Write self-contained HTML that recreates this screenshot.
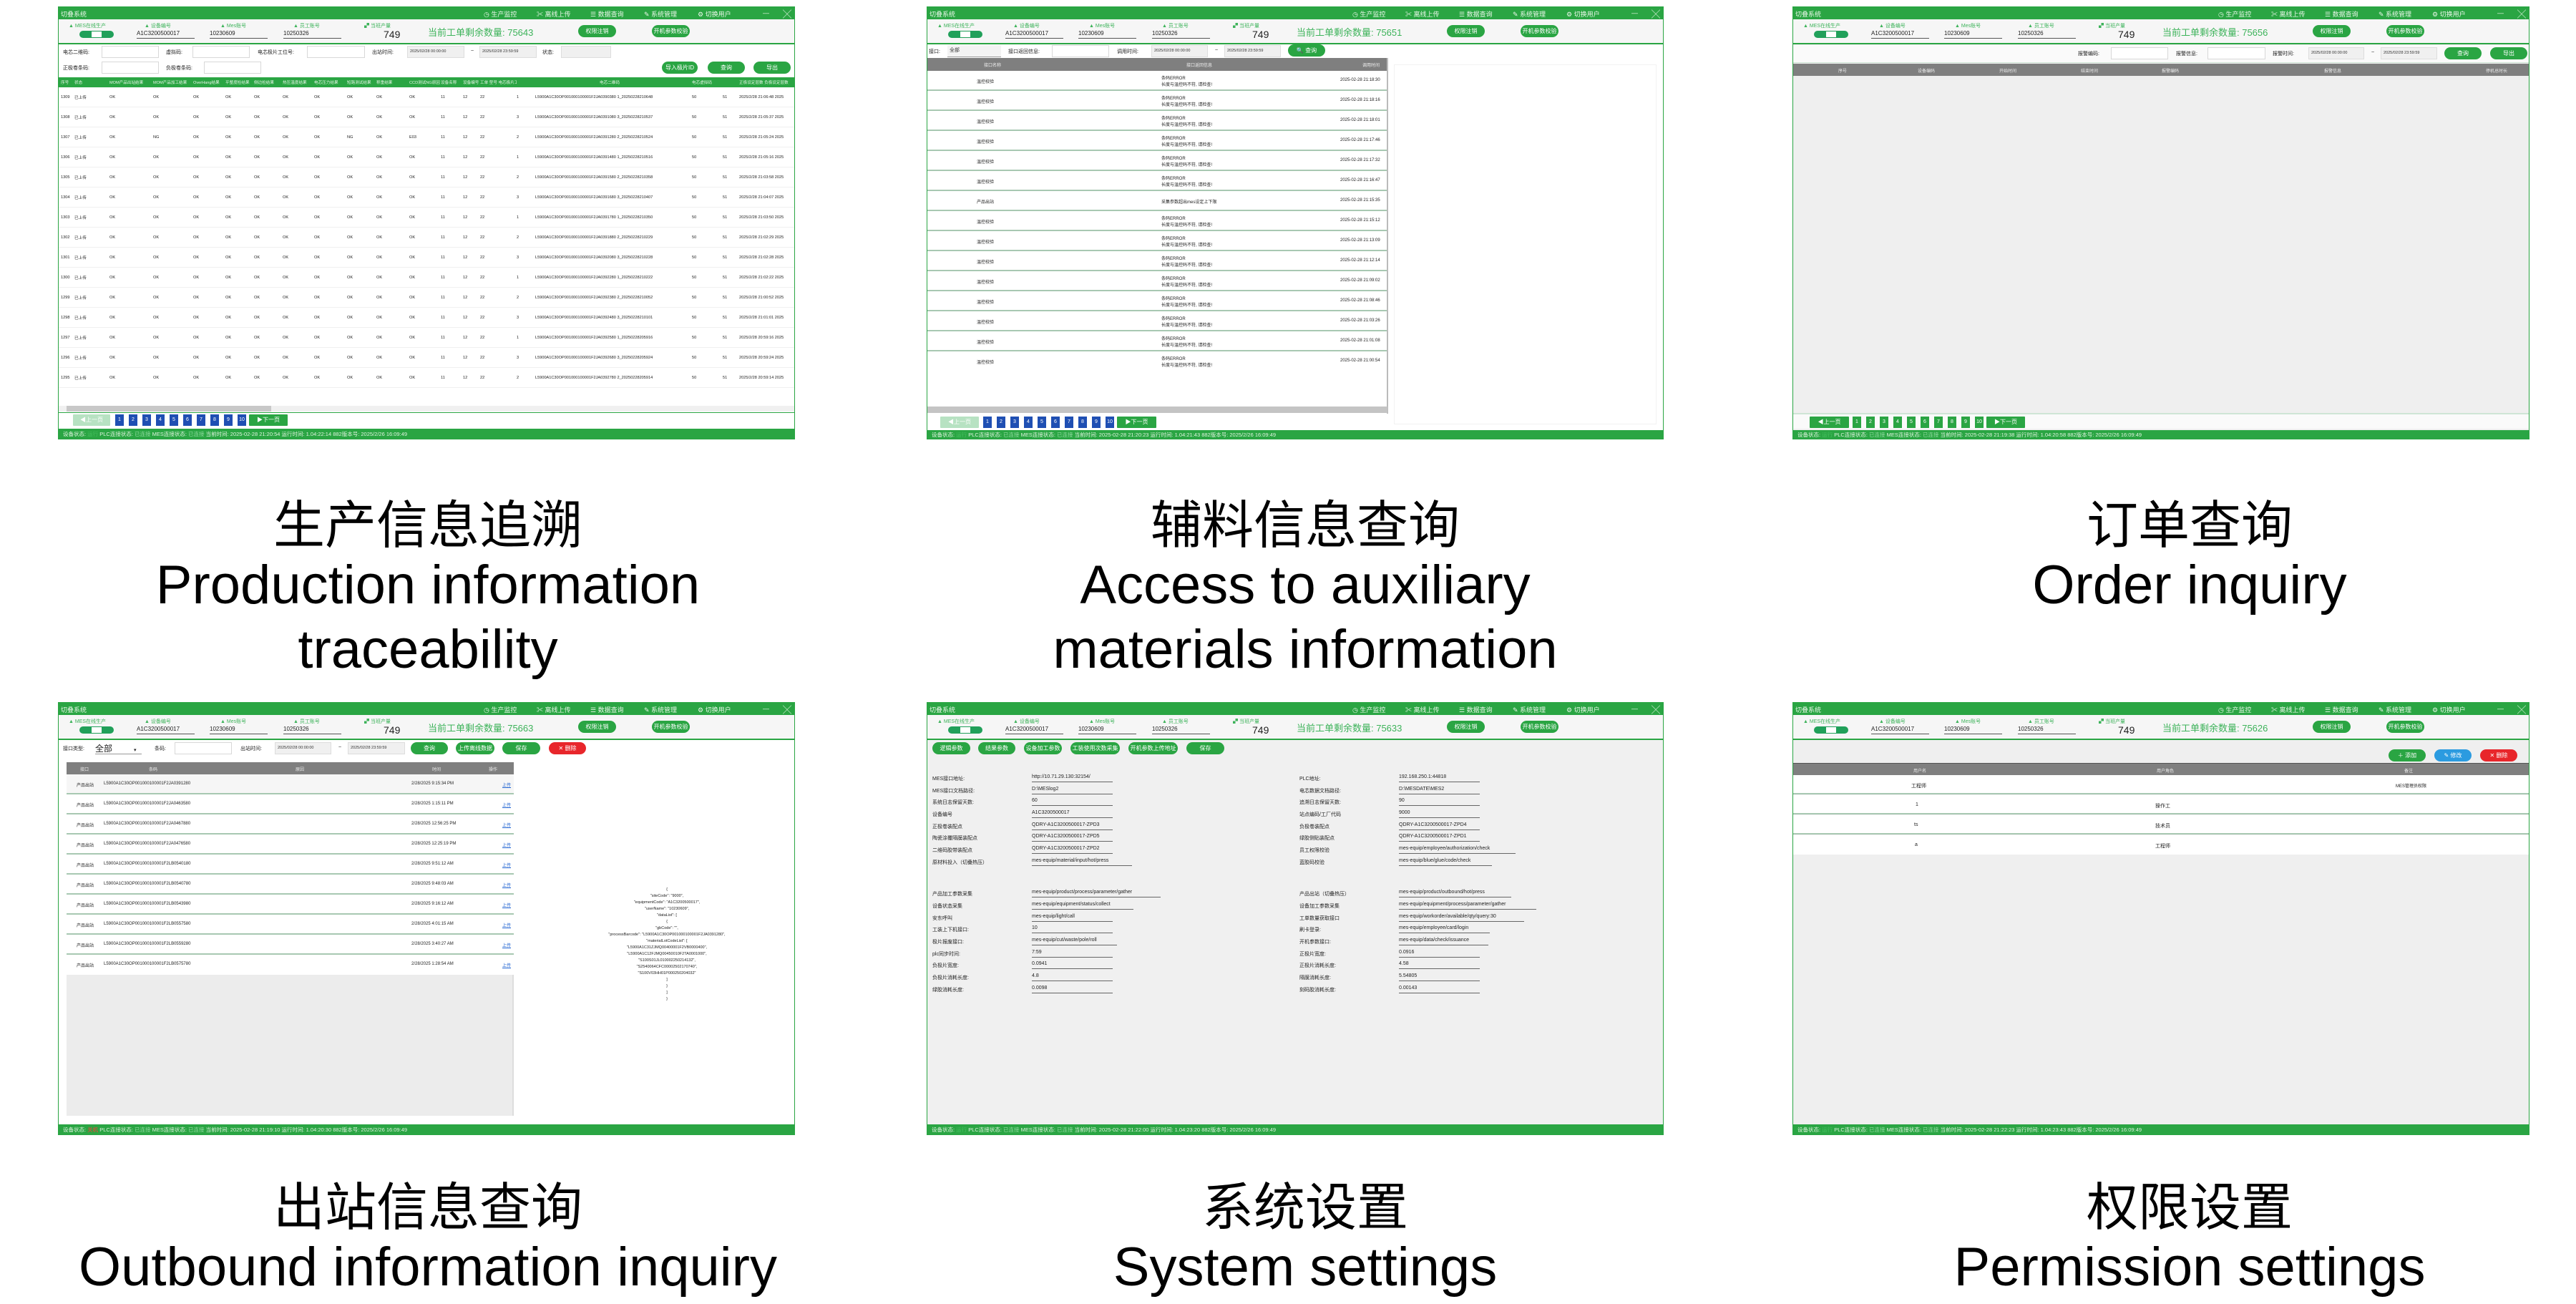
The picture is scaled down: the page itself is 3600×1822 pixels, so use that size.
<!DOCTYPE html>
<html><head><meta charset="utf-8">
<style>
*{margin:0;padding:0;box-sizing:border-box}
body{width:3600px;height:1822px;background:#fff;position:relative;overflow:hidden;font-family:"Liberation Sans","Noto Sans CJK SC",sans-serif}
.shot{position:absolute;width:1030px;height:605px;background:#fff;border:1px solid #2aa543;overflow:hidden;font-size:7px;color:#222;font-family:"Liberation Sans","Noto Sans CJK SC",sans-serif}
.a{position:absolute;white-space:nowrap}
.tb{position:absolute;left:0;top:0;width:100%;height:17px;background:#2aa543;color:#eaf7ea}
.tb .a{top:3px;font-size:9px}
.hd{position:absolute;left:0;top:17px;width:100%;height:35px;background:#f6f6f6;border-bottom:2px solid #2aa543}
.lb{color:#3db35a;font-size:7px;top:4px}
.val{top:15px;font-size:8px;border-bottom:1px solid #555;height:12px;width:81px;color:#222}
.tog{top:16px;left:29px;width:48px;height:10px;border-radius:5px;background:#21a05a}
.tog i{position:absolute;left:17px;top:1px;width:14px;height:8px;background:#fff}
.cnt{left:454px;top:13px;font-size:14px;color:#222}
.rem{left:516px;top:8px;font-size:13px;color:#3db35a}
.btn{position:absolute;background:#2aa543;color:#fff;border-radius:9px;text-align:center;height:17px;line-height:17px;font-size:8px;white-space:nowrap;overflow:hidden}
.red{background:#e8262b}.blue{background:#2b9be0}.pale{background:#b7e2c2}
.sb{position:absolute;left:0;top:589px;width:100%;height:16px;background:#2aa543;color:#dff2df;font-size:7.5px;line-height:16px;padding-left:6px;white-space:nowrap}
.inp{position:absolute;height:17px;background:#fff;border:1px solid #d8d8d8}
.dt{position:absolute;height:17px;background:#f0f0f0;border:1px solid #ddd;font-size:5.5px;line-height:15px;padding-left:3px;color:#333}
.pg{position:absolute;height:16px;width:12px;background:#1f4fb3;color:#fff;font-size:7px;text-align:center;line-height:16px}
.gh{position:absolute;background:#7f7f7f;color:#eee;font-size:6px}
.r1{position:absolute;left:0;width:1030px;height:28px;display:grid;grid-template-columns:19px 49px 61px 56px 45px 40px 40px 44px 46px 41px 46px 44px 31px 24px 51px 26px 219px 43px 23px 80px;align-items:center;font-size:5.6px;padding-left:3px;border-bottom:1px solid #f0f0f0}
.r1 span{white-space:nowrap;overflow:hidden}
.cap{position:absolute;width:1200px;text-align:center;color:#000;white-space:nowrap}
.zh{font-family:"Noto Sans CJK SC","WenQuanYi Zen Hei",sans-serif;font-size:72px;line-height:90px}
.en{font-family:"Liberation Sans",sans-serif;font-size:76px;line-height:90px}
.r2{position:absolute;left:0;width:643px;height:28px;border-bottom:2px solid #a8c8b2;background:#fff;font-size:6px}
.r4{position:absolute;left:11px;width:625px;height:28px;border-bottom:2px solid #a8c8b2;background:#fff;font-size:6px}
.fl{font-size:7px}
.fv{font-size:7px;border-bottom:1px solid #666;width:113px;height:11px}
</style></head><body>

<!-- ============ SHOT 1 ============ -->
<div class="shot" style="left:81px;top:9px">
 <div class="tb"><span class="a" style="left:3px">切叠系统</span><span class="a" style="left:594px">◷ 生产监控</span><span class="a" style="left:668px">✂ 离线上传</span><span class="a" style="left:743px">☰ 数据查询</span><span class="a" style="left:818px">✎ 系统管理</span><span class="a" style="left:893px">⚙ 切换用户</span><span class="a" style="left:984px">—</span><span class="a" style="left:1012px;font-size:12px;top:1px">╳</span></div>
 <div class="hd"><span class="a lb" style="left:14px">▲ MES在线生产</span><div class="a tog"><i></i></div><span class="a lb" style="left:120px">▲ 设备编号</span><span class="a val" style="left:109px">A1C3200500017</span><span class="a lb" style="left:226px">▲ Mes账号</span><span class="a val" style="left:211px">10230609</span><span class="a lb" style="left:328px">▲ 员工账号</span><span class="a val" style="left:314px">10250326</span><span class="a lb" style="left:427px">▞ 当班产量</span><span class="a cnt">749</span><span class="a rem">当前工单剩余数量: 75643</span><div class="btn" style="left:726px;top:8px;width:53px">权限注销</div><div class="btn" style="left:829px;top:8px;width:53px">开机参数校验</div></div>
 <span class="a" style="left:6px;top:58px">电芯二维码:</span><div class="inp" style="left:60px;top:54px;width:80px"></div>
 <span class="a" style="left:150px;top:58px">虚拟码:</span><div class="inp" style="left:187px;top:54px;width:80px"></div>
 <span class="a" style="left:278px;top:58px">电芯极片工位号:</span><div class="inp" style="left:347px;top:54px;width:81px"></div>
 <span class="a" style="left:438px;top:58px">出站时间:</span><div class="dt" style="left:487px;top:54px;width:80px">2025/02/28 00:00:00</div><span class="a" style="left:576px;top:58px">~</span><div class="dt" style="left:588px;top:54px;width:80px">2025/02/28 23:59:59</div>
 <span class="a" style="left:676px;top:58px">状态:</span><div class="dt" style="left:702px;top:54px;width:70px"></div>
 <span class="a" style="left:6px;top:80px">正极卷条码:</span><div class="inp" style="left:60px;top:76px;width:80px"></div>
 <span class="a" style="left:150px;top:80px">负极卷条码:</span><div class="inp" style="left:203px;top:76px;width:80px"></div>
 <div class="btn" style="left:843px;top:76px;width:50px">导入极片ID</div><div class="btn" style="left:907px;top:76px;width:52px">查询</div><div class="btn" style="left:971px;top:76px;width:52px">导出</div>
 <div class="r1" style="top:98px;height:14px;background:#2aa543;color:#e6f5e6;border:0"><span>序号</span><span>状态</span><span>MOM产品出站结果</span><span>MOM产品加工结果</span><span>OverHang结果</span><span>平整度检结果</span><span>侧边检结果</span><span>热压温度结果</span><span>电芯压力结果</span><span>短路测试结果</span><span>称重结果</span><span>CCD测试NG原因</span><span>设备名称</span><span>设备编号</span><span>工单 型号 电芯极片工位号</span><span></span><span style="padding-left:90px">电芯二维码</span><span>电芯虚拟码</span><span></span><span>正极设定层数 负极设定层数</span></div>
 <div class="r1" style="top:112px"><span>1309</span><span>已上传</span><span>OK</span><span>OK</span><span>OK</span><span>OK</span><span>OK</span><span>OK</span><span>OK</span><span>OK</span><span>OK</span><span>OK</span><span>11</span><span>12</span><span>22</span><span>1</span><span>L5900A1C30OP001000100001F2JA0390380 1_20250228210648</span><span>50</span><span>51</span><span>2025/2/28 21:06:48 2025</span></div>
 <div class="r1" style="top:140px"><span>1308</span><span>已上传</span><span>OK</span><span>OK</span><span>OK</span><span>OK</span><span>OK</span><span>OK</span><span>OK</span><span>OK</span><span>OK</span><span>OK</span><span>11</span><span>12</span><span>22</span><span>3</span><span>L5900A1C30OP001000100001F2JA0391080 3_20250228210537</span><span>50</span><span>51</span><span>2025/2/28 21:05:37 2025</span></div>
 <div class="r1" style="top:168px"><span>1307</span><span>已上传</span><span>OK</span><span>NG</span><span>OK</span><span>OK</span><span>OK</span><span>OK</span><span>OK</span><span>NG</span><span>OK</span><span>E03</span><span>11</span><span>12</span><span>22</span><span>2</span><span>L5900A1C30OP001000100001F2JA0391280 2_20250228210524</span><span>50</span><span>51</span><span>2025/2/28 21:05:24 2025</span></div>
 <div class="r1" style="top:196px"><span>1306</span><span>已上传</span><span>OK</span><span>OK</span><span>OK</span><span>OK</span><span>OK</span><span>OK</span><span>OK</span><span>OK</span><span>OK</span><span>OK</span><span>11</span><span>12</span><span>22</span><span>1</span><span>L5900A1C30OP001000100001F2JA0391480 1_20250228210516</span><span>50</span><span>51</span><span>2025/2/28 21:05:16 2025</span></div>
 <div class="r1" style="top:224px"><span>1305</span><span>已上传</span><span>OK</span><span>OK</span><span>OK</span><span>OK</span><span>OK</span><span>OK</span><span>OK</span><span>OK</span><span>OK</span><span>OK</span><span>11</span><span>12</span><span>22</span><span>2</span><span>L5900A1C30OP001000100001F2JA0391580 2_20250228210358</span><span>50</span><span>51</span><span>2025/2/28 21:03:58 2025</span></div>
 <div class="r1" style="top:252px"><span>1304</span><span>已上传</span><span>OK</span><span>OK</span><span>OK</span><span>OK</span><span>OK</span><span>OK</span><span>OK</span><span>OK</span><span>OK</span><span>OK</span><span>11</span><span>12</span><span>22</span><span>3</span><span>L5900A1C30OP001000100001F2JA0391680 3_20250228210407</span><span>50</span><span>51</span><span>2025/2/28 21:04:07 2025</span></div>
 <div class="r1" style="top:280px"><span>1303</span><span>已上传</span><span>OK</span><span>OK</span><span>OK</span><span>OK</span><span>OK</span><span>OK</span><span>OK</span><span>OK</span><span>OK</span><span>OK</span><span>11</span><span>12</span><span>22</span><span>1</span><span>L5900A1C30OP001000100001F2JA0391780 1_20250228210350</span><span>50</span><span>51</span><span>2025/2/28 21:03:50 2025</span></div>
 <div class="r1" style="top:308px"><span>1302</span><span>已上传</span><span>OK</span><span>OK</span><span>OK</span><span>OK</span><span>OK</span><span>OK</span><span>OK</span><span>OK</span><span>OK</span><span>OK</span><span>11</span><span>12</span><span>22</span><span>2</span><span>L5900A1C30OP001000100001F2JA0391880 2_20250228210229</span><span>50</span><span>51</span><span>2025/2/28 21:02:29 2025</span></div>
 <div class="r1" style="top:336px"><span>1301</span><span>已上传</span><span>OK</span><span>OK</span><span>OK</span><span>OK</span><span>OK</span><span>OK</span><span>OK</span><span>OK</span><span>OK</span><span>OK</span><span>11</span><span>12</span><span>22</span><span>3</span><span>L5900A1C30OP001000100001F2JA0392080 3_20250228210228</span><span>50</span><span>51</span><span>2025/2/28 21:02:28 2025</span></div>
 <div class="r1" style="top:364px"><span>1300</span><span>已上传</span><span>OK</span><span>OK</span><span>OK</span><span>OK</span><span>OK</span><span>OK</span><span>OK</span><span>OK</span><span>OK</span><span>OK</span><span>11</span><span>12</span><span>22</span><span>1</span><span>L5900A1C30OP001000100001F2JA0392280 1_20250228210222</span><span>50</span><span>51</span><span>2025/2/28 21:02:22 2025</span></div>
 <div class="r1" style="top:392px"><span>1299</span><span>已上传</span><span>OK</span><span>OK</span><span>OK</span><span>OK</span><span>OK</span><span>OK</span><span>OK</span><span>OK</span><span>OK</span><span>OK</span><span>11</span><span>12</span><span>22</span><span>2</span><span>L5900A1C30OP001000100001F2JA0392380 2_20250228210052</span><span>50</span><span>51</span><span>2025/2/28 21:00:52 2025</span></div>
 <div class="r1" style="top:420px"><span>1298</span><span>已上传</span><span>OK</span><span>OK</span><span>OK</span><span>OK</span><span>OK</span><span>OK</span><span>OK</span><span>OK</span><span>OK</span><span>OK</span><span>11</span><span>12</span><span>22</span><span>3</span><span>L5900A1C30OP001000100001F2JA0392480 3_20250228210101</span><span>50</span><span>51</span><span>2025/2/28 21:01:01 2025</span></div>
 <div class="r1" style="top:448px"><span>1297</span><span>已上传</span><span>OK</span><span>OK</span><span>OK</span><span>OK</span><span>OK</span><span>OK</span><span>OK</span><span>OK</span><span>OK</span><span>OK</span><span>11</span><span>12</span><span>22</span><span>1</span><span>L5900A1C30OP001000100001F2JA0392580 1_20250228205916</span><span>50</span><span>51</span><span>2025/2/28 20:59:16 2025</span></div>
 <div class="r1" style="top:476px"><span>1296</span><span>已上传</span><span>OK</span><span>OK</span><span>OK</span><span>OK</span><span>OK</span><span>OK</span><span>OK</span><span>OK</span><span>OK</span><span>OK</span><span>11</span><span>12</span><span>22</span><span>3</span><span>L5900A1C30OP001000100001F2JA0392680 3_20250228205924</span><span>50</span><span>51</span><span>2025/2/28 20:59:24 2025</span></div>
 <div class="r1" style="top:504px"><span>1295</span><span>已上传</span><span>OK</span><span>OK</span><span>OK</span><span>OK</span><span>OK</span><span>OK</span><span>OK</span><span>OK</span><span>OK</span><span>OK</span><span>11</span><span>12</span><span>22</span><span>2</span><span>L5900A1C30OP001000100001F2JA0392780 2_20250228205914</span><span>50</span><span>51</span><span>2025/2/28 20:59:14 2025</span></div>
 <div class="a" style="left:0;top:557px;width:1030px;height:8px;background:#f0f0f0"></div><div class="a" style="left:11px;top:557px;width:286px;height:8px;background:#c8c8c8"></div>
 <div class="a" style="left:0;top:566px;width:1030px;height:1px;background:#2aa543"></div>
 <div class="btn pale" style="left:20px;top:569px;width:52px;height:16px;border-radius:1px;line-height:16px">◀上一页</div>
 <div class="pg" style="left:79px;top:569px">1</div><div class="pg" style="left:98px;top:569px">2</div><div class="pg" style="left:117px;top:569px">3</div><div class="pg" style="left:136px;top:569px">4</div><div class="pg" style="left:155px;top:569px">5</div><div class="pg" style="left:174px;top:569px">6</div><div class="pg" style="left:193px;top:569px">7</div><div class="pg" style="left:212px;top:569px">8</div><div class="pg" style="left:231px;top:569px">9</div><div class="pg" style="left:250px;top:569px">10</div>
 <div class="btn" style="left:266px;top:569px;width:54px;height:16px;border-radius:1px;line-height:16px">▶下一页</div>
 <div class="sb">设备状态: <span style="color:#46c060">运行</span> PLC连接状态: <span style="color:#8fd99f">已连接</span> MES连接状态: <span style="color:#8fd99f">已连接</span> 当前时间: 2025-02-28 21:20:54 运行时间: 1.04:22:14 882版本号: 2025/2/26 16:09:49</div>
</div>

<!-- ============ SHOT 2 ============ -->
<div class="shot" style="left:1295px;top:9px">
 <div class="tb"><span class="a" style="left:3px">切叠系统</span><span class="a" style="left:594px">◷ 生产监控</span><span class="a" style="left:668px">✂ 离线上传</span><span class="a" style="left:743px">☰ 数据查询</span><span class="a" style="left:818px">✎ 系统管理</span><span class="a" style="left:893px">⚙ 切换用户</span><span class="a" style="left:984px">—</span><span class="a" style="left:1012px;font-size:12px;top:1px">╳</span></div>
 <div class="hd"><span class="a lb" style="left:14px">▲ MES在线生产</span><div class="a tog"><i></i></div><span class="a lb" style="left:120px">▲ 设备编号</span><span class="a val" style="left:109px">A1C3200500017</span><span class="a lb" style="left:226px">▲ Mes账号</span><span class="a val" style="left:211px">10230609</span><span class="a lb" style="left:328px">▲ 员工账号</span><span class="a val" style="left:314px">10250326</span><span class="a lb" style="left:427px">▞ 当班产量</span><span class="a cnt">749</span><span class="a rem">当前工单剩余数量: 75651</span><div class="btn" style="left:726px;top:8px;width:53px">权限注销</div><div class="btn" style="left:829px;top:8px;width:53px">开机参数校验</div></div>
 <span class="a" style="left:2px;top:57px">接口:</span><div class="dt" style="left:28px;top:53px;width:75px;background:#f3f3f3;border:0;border-bottom:1px solid #999;font-size:7px">全部</div>
 <span class="a" style="left:113px;top:57px">接口返回信息:</span><div class="inp" style="left:174px;top:53px;width:80px"></div>
 <span class="a" style="left:265px;top:57px">调用时间:</span><div class="dt" style="left:313px;top:53px;width:79px">2025/02/28 00:00:00</div><span class="a" style="left:402px;top:57px">~</span><div class="dt" style="left:415px;top:53px;width:79px">2025/02/28 23:59:59</div>
 <div class="btn" style="left:504px;top:52px;width:52px">🔍 查询</div>
 <div class="gh" style="left:0;top:71px;width:643px;height:18px"><span class="a" style="left:79px;top:5px">接口名称</span><span class="a" style="left:362px;top:5px">接口返回信息</span><span class="a" style="left:608px;top:5px">调用时间</span></div>
 <div class="a" style="left:652px;top:80px;width:367px;height:503px;background:#fff;border:1px solid #f2f2f2"></div>
 <div class="r2" style="top:89px"><span class="a" style="left:69px;top:10px">温控校验</span><span class="a" style="left:327px;top:5px">条码ERROR<br>长度与温控码不符, 请检查!</span><span class="a" style="left:577px;top:10px">2025-02-28 21:18:30</span></div>
 <div class="r2" style="top:117px"><span class="a" style="left:69px;top:10px">温控校验</span><span class="a" style="left:327px;top:5px">条码ERROR<br>长度与温控码不符, 请检查!</span><span class="a" style="left:577px;top:10px">2025-02-28 21:18:16</span></div>
 <div class="r2" style="top:145px"><span class="a" style="left:69px;top:10px">温控校验</span><span class="a" style="left:327px;top:5px">条码ERROR<br>长度与温控码不符, 请检查!</span><span class="a" style="left:577px;top:10px">2025-02-28 21:18:01</span></div>
 <div class="r2" style="top:173px"><span class="a" style="left:69px;top:10px">温控校验</span><span class="a" style="left:327px;top:5px">条码ERROR<br>长度与温控码不符, 请检查!</span><span class="a" style="left:577px;top:10px">2025-02-28 21:17:46</span></div>
 <div class="r2" style="top:201px"><span class="a" style="left:69px;top:10px">温控校验</span><span class="a" style="left:327px;top:5px">条码ERROR<br>长度与温控码不符, 请检查!</span><span class="a" style="left:577px;top:10px">2025-02-28 21:17:32</span></div>
 <div class="r2" style="top:229px"><span class="a" style="left:69px;top:10px">温控校验</span><span class="a" style="left:327px;top:5px">条码ERROR<br>长度与温控码不符, 请检查!</span><span class="a" style="left:577px;top:10px">2025-02-28 21:16:47</span></div>
 <div class="r2" style="top:257px"><span class="a" style="left:69px;top:10px">产品出站</span><span class="a" style="left:327px;top:10px">采集参数超出mes设定上下限</span><span class="a" style="left:577px;top:10px">2025-02-28 21:15:35</span></div>
 <div class="r2" style="top:285px"><span class="a" style="left:69px;top:10px">温控校验</span><span class="a" style="left:327px;top:5px">条码ERROR<br>长度与温控码不符, 请检查!</span><span class="a" style="left:577px;top:10px">2025-02-28 21:15:12</span></div>
 <div class="r2" style="top:313px"><span class="a" style="left:69px;top:10px">温控校验</span><span class="a" style="left:327px;top:5px">条码ERROR<br>长度与温控码不符, 请检查!</span><span class="a" style="left:577px;top:10px">2025-02-28 21:13:09</span></div>
 <div class="r2" style="top:341px"><span class="a" style="left:69px;top:10px">温控校验</span><span class="a" style="left:327px;top:5px">条码ERROR<br>长度与温控码不符, 请检查!</span><span class="a" style="left:577px;top:10px">2025-02-28 21:12:14</span></div>
 <div class="r2" style="top:369px"><span class="a" style="left:69px;top:10px">温控校验</span><span class="a" style="left:327px;top:5px">条码ERROR<br>长度与温控码不符, 请检查!</span><span class="a" style="left:577px;top:10px">2025-02-28 21:09:02</span></div>
 <div class="r2" style="top:397px"><span class="a" style="left:69px;top:10px">温控校验</span><span class="a" style="left:327px;top:5px">条码ERROR<br>长度与温控码不符, 请检查!</span><span class="a" style="left:577px;top:10px">2025-02-28 21:08:46</span></div>
 <div class="r2" style="top:425px"><span class="a" style="left:69px;top:10px">温控校验</span><span class="a" style="left:327px;top:5px">条码ERROR<br>长度与温控码不符, 请检查!</span><span class="a" style="left:577px;top:10px">2025-02-28 21:03:26</span></div>
 <div class="r2" style="top:453px"><span class="a" style="left:69px;top:10px">温控校验</span><span class="a" style="left:327px;top:5px">条码ERROR<br>长度与温控码不符, 请检查!</span><span class="a" style="left:577px;top:10px">2025-02-28 21:01:08</span></div>
 <div class="r2" style="top:481px;border-bottom:0"><span class="a" style="left:69px;top:10px">温控校验</span><span class="a" style="left:327px;top:5px">条码ERROR<br>长度与温控码不符, 请检查!</span><span class="a" style="left:577px;top:10px">2025-02-28 21:00:54</span></div>
 <div class="a" style="left:642px;top:71px;width:2px;height:497px;background:#bbb"></div>
 <div class="a" style="left:0;top:558px;width:643px;height:9px;background:#c4c4c4"></div>
 <div class="btn pale" style="left:18px;top:572px;width:54px;height:16px;border-radius:1px;line-height:16px">◀上一页</div>
 <div class="pg" style="left:78px;top:572px">1</div><div class="pg" style="left:97px;top:572px">2</div><div class="pg" style="left:116px;top:572px">3</div><div class="pg" style="left:135px;top:572px">4</div><div class="pg" style="left:154px;top:572px">5</div><div class="pg" style="left:173px;top:572px">6</div><div class="pg" style="left:192px;top:572px">7</div><div class="pg" style="left:211px;top:572px">8</div><div class="pg" style="left:230px;top:572px">9</div><div class="pg" style="left:249px;top:572px">10</div>
 <div class="btn" style="left:265px;top:572px;width:55px;height:16px;border-radius:1px;line-height:16px">▶下一页</div>
 <div class="sb" style="top:591px;height:14px;line-height:14px">设备状态: <span style="color:#46c060">运行</span> PLC连接状态: <span style="color:#8fd99f">已连接</span> MES连接状态: <span style="color:#8fd99f">已连接</span> 当前时间: 2025-02-28 21:20:23 运行时间: 1.04:21:43 882版本号: 2025/2/26 16:09:49</div>
</div>

<!-- ============ SHOT 3 ============ -->
<div class="shot" style="left:2505px;top:9px;background:#efefef">
 <div class="tb"><span class="a" style="left:3px">切叠系统</span><span class="a" style="left:594px">◷ 生产监控</span><span class="a" style="left:668px">✂ 离线上传</span><span class="a" style="left:743px">☰ 数据查询</span><span class="a" style="left:818px">✎ 系统管理</span><span class="a" style="left:893px">⚙ 切换用户</span><span class="a" style="left:984px">—</span><span class="a" style="left:1012px;font-size:12px;top:1px">╳</span></div>
 <div class="hd"><span class="a lb" style="left:14px">▲ MES在线生产</span><div class="a tog"><i></i></div><span class="a lb" style="left:120px">▲ 设备编号</span><span class="a val" style="left:109px">A1C3200500017</span><span class="a lb" style="left:226px">▲ Mes账号</span><span class="a val" style="left:211px">10230609</span><span class="a lb" style="left:328px">▲ 员工账号</span><span class="a val" style="left:314px">10250326</span><span class="a lb" style="left:427px">▞ 当班产量</span><span class="a cnt">749</span><span class="a rem">当前工单剩余数量: 75656</span><div class="btn" style="left:726px;top:8px;width:53px">权限注销</div><div class="btn" style="left:829px;top:8px;width:53px">开机参数校验</div></div>
 <div class="a" style="left:0;top:53px;width:1030px;height:25px;background:#fafafa;border-bottom:1px solid #cfe5d5"></div>
 <span class="a" style="left:398px;top:60px">报警编码:</span><div class="inp" style="left:444px;top:56px;width:80px"></div>
 <span class="a" style="left:535px;top:60px">报警信息:</span><div class="inp" style="left:579px;top:56px;width:81px"></div>
 <span class="a" style="left:670px;top:60px">报警时间:</span><div class="dt" style="left:720px;top:56px;width:78px">2025/02/28 00:00:00</div><span class="a" style="left:808px;top:60px">~</span><div class="dt" style="left:821px;top:56px;width:79px">2025/02/28 23:59:59</div>
 <div class="btn" style="left:910px;top:56px;width:52px">查询</div><div class="btn" style="left:974px;top:56px;width:52px">导出</div>
 <div class="gh" style="left:0;top:79px;width:1030px;height:17px"><span class="a" style="left:63px;top:5px">序号</span><span class="a" style="left:174px;top:5px">设备编码</span><span class="a" style="left:288px;top:5px">开始时间</span><span class="a" style="left:402px;top:5px">结束时间</span><span class="a" style="left:515px;top:5px">报警编码</span><span class="a" style="left:742px;top:5px">报警信息</span><span class="a" style="left:968px;top:5px">停机总时长</span></div>
 <div class="a" style="left:0;top:567px;width:1030px;height:2px;background:#cfe5d5"></div>
 <div class="a" style="left:0;top:569px;width:1030px;height:20px;background:#fafafa"></div>
 <div class="btn" style="left:23px;top:572px;width:55px;height:16px;border-radius:1px;line-height:16px">◀上一页</div>
 <div class="pg" style="left:83px;top:572px;background:#2aa543">1</div><div class="pg" style="left:102px;top:572px;background:#2aa543">2</div><div class="pg" style="left:121px;top:572px;background:#2aa543">3</div><div class="pg" style="left:140px;top:572px;background:#2aa543">4</div><div class="pg" style="left:159px;top:572px;background:#2aa543">5</div><div class="pg" style="left:178px;top:572px;background:#2aa543">6</div><div class="pg" style="left:197px;top:572px;background:#2aa543">7</div><div class="pg" style="left:216px;top:572px;background:#2aa543">8</div><div class="pg" style="left:235px;top:572px;background:#2aa543">9</div><div class="pg" style="left:254px;top:572px;background:#2aa543">10</div>
 <div class="btn" style="left:270px;top:572px;width:54px;height:16px;border-radius:1px;line-height:16px">▶下一页</div>
 <div class="sb" style="top:591px;height:14px;line-height:14px">设备状态: <span style="color:#46c060">运行</span> PLC连接状态: <span style="color:#8fd99f">已连接</span> MES连接状态: <span style="color:#8fd99f">已连接</span> 当前时间: 2025-02-28 21:19:38 运行时间: 1.04:20:58 882版本号: 2025/2/26 16:09:49</div>
</div>

<!-- ============ SHOT 4 ============ -->
<div class="shot" style="left:81px;top:981px">
 <div class="tb"><span class="a" style="left:3px">切叠系统</span><span class="a" style="left:594px">◷ 生产监控</span><span class="a" style="left:668px">✂ 离线上传</span><span class="a" style="left:743px">☰ 数据查询</span><span class="a" style="left:818px">✎ 系统管理</span><span class="a" style="left:893px">⚙ 切换用户</span><span class="a" style="left:984px">—</span><span class="a" style="left:1012px;font-size:12px;top:1px">╳</span></div>
 <div class="hd"><span class="a lb" style="left:14px">▲ MES在线生产</span><div class="a tog"><i></i></div><span class="a lb" style="left:120px">▲ 设备编号</span><span class="a val" style="left:109px">A1C3200500017</span><span class="a lb" style="left:226px">▲ Mes账号</span><span class="a val" style="left:211px">10230609</span><span class="a lb" style="left:328px">▲ 员工账号</span><span class="a val" style="left:314px">10250326</span><span class="a lb" style="left:427px">▞ 当班产量</span><span class="a cnt">749</span><span class="a rem">当前工单剩余数量: 75663</span><div class="btn" style="left:726px;top:8px;width:53px">权限注销</div><div class="btn" style="left:829px;top:8px;width:53px">开机参数校验</div></div>
 <span class="a" style="left:6px;top:59px">接口类型:</span><div class="a" style="left:51px;top:55px;width:65px;height:17px;border-bottom:1px solid #999;font-size:12px">全部<span style="font-size:7px;margin-left:30px">▾</span></div>
 <span class="a" style="left:134px;top:59px">条码:</span><div class="inp" style="left:162px;top:55px;width:80px"></div>
 <span class="a" style="left:254px;top:59px">出站时间:</span><div class="dt" style="left:302px;top:55px;width:79px">2025/02/28 00:00:00</div><span class="a" style="left:391px;top:59px">~</span><div class="dt" style="left:404px;top:55px;width:80px">2025/02/28 23:59:59</div>
 <div class="btn" style="left:492px;top:55px;width:52px">查询</div><div class="btn" style="left:555px;top:55px;width:54px">上传离线数据</div><div class="btn" style="left:620px;top:55px;width:53px">保存</div><div class="btn red" style="left:685px;top:55px;width:52px">✕ 删除</div>
 <div class="a" style="left:11px;top:83px;width:625px;height:494px;background:#ececec;border-right:2px solid #ddd"></div>
 <div class="gh" style="left:11px;top:83px;width:625px;height:17px"><span class="a" style="left:19px;top:5px">接口</span><span class="a" style="left:115px;top:5px">条码</span><span class="a" style="left:320px;top:5px">原因</span><span class="a" style="left:511px;top:5px">时间</span><span class="a" style="left:590px;top:5px">操作</span></div>
 <div class="r4" style="top:100px;background:#f6f6f6"><span class="a" style="left:14px;top:10px">产品出站</span><span class="a" style="left:52px;top:10px">L5900A1C30OP001000100001F2JA0391280</span><span class="a" style="left:482px;top:10px">2/28/2025 9:15:34 PM</span><span class="a" style="left:609px;top:10px;color:#1a5fd0;text-decoration:underline">上传</span></div>
 <div class="r4" style="top:128px"><span class="a" style="left:14px;top:10px">产品出站</span><span class="a" style="left:52px;top:10px">L5900A1C30OP001000100001F2JA0463580</span><span class="a" style="left:482px;top:10px">2/28/2025 1:15:11 PM</span><span class="a" style="left:609px;top:10px;color:#1a5fd0;text-decoration:underline">上传</span></div>
 <div class="r4" style="top:156px"><span class="a" style="left:14px;top:10px">产品出站</span><span class="a" style="left:52px;top:10px">L5900A1C30OP001000100001F2JA0467880</span><span class="a" style="left:482px;top:10px">2/28/2025 12:56:25 PM</span><span class="a" style="left:609px;top:10px;color:#1a5fd0;text-decoration:underline">上传</span></div>
 <div class="r4" style="top:184px"><span class="a" style="left:14px;top:10px">产品出站</span><span class="a" style="left:52px;top:10px">L5900A1C30OP001000100001F2JA0476580</span><span class="a" style="left:482px;top:10px">2/28/2025 12:25:19 PM</span><span class="a" style="left:609px;top:10px;color:#1a5fd0;text-decoration:underline">上传</span></div>
 <div class="r4" style="top:212px"><span class="a" style="left:14px;top:10px">产品出站</span><span class="a" style="left:52px;top:10px">L5900A1C30OP001000100001F2LB0540180</span><span class="a" style="left:482px;top:10px">2/28/2025 9:51:12 AM</span><span class="a" style="left:609px;top:10px;color:#1a5fd0;text-decoration:underline">上传</span></div>
 <div class="r4" style="top:240px"><span class="a" style="left:14px;top:10px">产品出站</span><span class="a" style="left:52px;top:10px">L5900A1C30OP001000100001F2LB0540780</span><span class="a" style="left:482px;top:10px">2/28/2025 9:48:03 AM</span><span class="a" style="left:609px;top:10px;color:#1a5fd0;text-decoration:underline">上传</span></div>
 <div class="r4" style="top:268px"><span class="a" style="left:14px;top:10px">产品出站</span><span class="a" style="left:52px;top:10px">L5900A1C30OP001000100001F2LB0543980</span><span class="a" style="left:482px;top:10px">2/28/2025 9:16:12 AM</span><span class="a" style="left:609px;top:10px;color:#1a5fd0;text-decoration:underline">上传</span></div>
 <div class="r4" style="top:296px"><span class="a" style="left:14px;top:10px">产品出站</span><span class="a" style="left:52px;top:10px">L5900A1C30OP001000100001F2LB0557580</span><span class="a" style="left:482px;top:10px">2/28/2025 4:01:15 AM</span><span class="a" style="left:609px;top:10px;color:#1a5fd0;text-decoration:underline">上传</span></div>
 <div class="r4" style="top:324px"><span class="a" style="left:14px;top:10px">产品出站</span><span class="a" style="left:52px;top:10px">L5900A1C30OP001000100001F2LB0559280</span><span class="a" style="left:482px;top:10px">2/28/2025 3:40:27 AM</span><span class="a" style="left:609px;top:10px;color:#1a5fd0;text-decoration:underline">上传</span></div>
 <div class="r4" style="top:352px;border-bottom:0"><span class="a" style="left:14px;top:10px">产品出站</span><span class="a" style="left:52px;top:10px">L5900A1C30OP001000100001F2LB0575780</span><span class="a" style="left:482px;top:10px">2/28/2025 1:28:54 AM</span><span class="a" style="left:609px;top:10px;color:#1a5fd0;text-decoration:underline">上传</span></div>
 <div class="a" style="left:700px;top:257px;width:300px;text-align:center;font-size:5.5px;line-height:9px;white-space:pre">{
"siteCode": "9000",
"equipmentCode": "A1C3200500017",
"userName": "10230609",
"dataList": [
{
"gbCode": "",
"processBarcode": "L5900A1C30OP001000100001F2JA0391280",
"materialLotCodeList": [
"L5900A1C31ZJMQ00400001F2VB0000400",
"L5900A1C12FJMQ00450010F2TA0001000",
"S100S01JL010002250214132",
"S2540064CFC00002502170740",
"S100V03HH01P000250204032"
]
}
]
}</div>
 <div class="sb">设备状态: <span style="color:#ff3b3b">关机</span> PLC连接状态: <span style="color:#8fd99f">已连接</span> MES连接状态: <span style="color:#8fd99f">已连接</span> 当前时间: 2025-02-28 21:19:10 运行时间: 1.04:20:30 882版本号: 2025/2/26 16:09:49</div>
</div>

<!-- ============ SHOT 5 ============ -->
<div class="shot" style="left:1295px;top:981px;background:#f0f0f0">
 <div class="tb"><span class="a" style="left:3px">切叠系统</span><span class="a" style="left:594px">◷ 生产监控</span><span class="a" style="left:668px">✂ 离线上传</span><span class="a" style="left:743px">☰ 数据查询</span><span class="a" style="left:818px">✎ 系统管理</span><span class="a" style="left:893px">⚙ 切换用户</span><span class="a" style="left:984px">—</span><span class="a" style="left:1012px;font-size:12px;top:1px">╳</span></div>
 <div class="hd"><span class="a lb" style="left:14px">▲ MES在线生产</span><div class="a tog"><i></i></div><span class="a lb" style="left:120px">▲ 设备编号</span><span class="a val" style="left:109px">A1C3200500017</span><span class="a lb" style="left:226px">▲ Mes账号</span><span class="a val" style="left:211px">10230609</span><span class="a lb" style="left:328px">▲ 员工账号</span><span class="a val" style="left:314px">10250326</span><span class="a lb" style="left:427px">▞ 当班产量</span><span class="a cnt">749</span><span class="a rem">当前工单剩余数量: 75633</span><div class="btn" style="left:726px;top:8px;width:53px">权限注销</div><div class="btn" style="left:829px;top:8px;width:53px">开机参数校验</div></div>
 <div class="btn" style="left:7px;top:55px;width:53px">逻辑参数</div><div class="btn" style="left:71px;top:55px;width:52px">结果参数</div><div class="btn" style="left:135px;top:55px;width:53px">设备加工参数</div><div class="btn" style="left:200px;top:55px;width:69px">工装使用次数采集</div><div class="btn" style="left:281px;top:55px;width:69px">开机参数上传地址</div><div class="btn" style="left:362px;top:55px;width:53px">保存</div>
 <span class="a fl" style="left:7px;top:101px">MES接口地址:</span><span class="a fv" style="left:146px;top:100px">http://10.71.29.130:32154/</span>
 <span class="a fl" style="left:7px;top:118px">MES接口文档路径:</span><span class="a fv" style="left:146px;top:117px">D:\MESlog2</span>
 <span class="a fl" style="left:7px;top:134px">系统日志保留天数:</span><span class="a fv" style="left:146px;top:133px">60</span>
 <span class="a fl" style="left:7px;top:151px">设备编号</span><span class="a fv" style="left:146px;top:150px">A1C3200500017</span>
 <span class="a fl" style="left:7px;top:168px">正极卷装配点</span><span class="a fv" style="left:146px;top:167px">QDRY-A1C3200500017-ZPD3</span>
 <span class="a fl" style="left:7px;top:184px">陶瓷涂覆隔膜装配点</span><span class="a fv" style="left:146px;top:183px">QDRY-A1C3200500017-ZPD5</span>
 <span class="a fl" style="left:7px;top:201px">二维码胶带装配点</span><span class="a fv" style="left:146px;top:200px">QDRY-A1C3200500017-ZPD2</span>
 <span class="a fl" style="left:7px;top:218px">原材料投入（切叠热压）</span><span class="a fv" style="left:146px;top:217px;width:140px">mes-equip/material/input/hot/press</span>
 <span class="a fl" style="left:520px;top:101px">PLC地址:</span><span class="a fv" style="left:659px;top:100px">192.168.250.1:44818</span>
 <span class="a fl" style="left:520px;top:118px">电芯数据文档路径:</span><span class="a fv" style="left:659px;top:117px">D:\MESDATE\MES2</span>
 <span class="a fl" style="left:520px;top:134px">追溯日志保留天数:</span><span class="a fv" style="left:659px;top:133px">90</span>
 <span class="a fl" style="left:520px;top:151px">站点编码/工厂代码</span><span class="a fv" style="left:659px;top:150px">9000</span>
 <span class="a fl" style="left:520px;top:168px">负极卷装配点</span><span class="a fv" style="left:659px;top:167px">QDRY-A1C3200500017-ZPD4</span>
 <span class="a fl" style="left:520px;top:184px">绿胶侧贴装配点</span><span class="a fv" style="left:659px;top:183px">QDRY-A1C3200500017-ZPD1</span>
 <span class="a fl" style="left:520px;top:201px">员工权限校验</span><span class="a fv" style="left:659px;top:200px;width:163px">mes-equip/employee/authorization/check</span>
 <span class="a fl" style="left:520px;top:218px">蓝胶码校验</span><span class="a fv" style="left:659px;top:217px;width:130px">mes-equip/blue/glue/code/check</span>
 <span class="a fl" style="left:7px;top:262px">产品加工参数采集</span><span class="a fv" style="left:146px;top:261px;width:180px">mes-equip/product/process/parameter/gather</span>
 <span class="a fl" style="left:7px;top:279px">设备状态采集</span><span class="a fv" style="left:146px;top:278px;width:142px">mes-equip/equipment/status/collect</span>
 <span class="a fl" style="left:7px;top:296px">安东呼叫</span><span class="a fv" style="left:146px;top:295px">mes-equip/light/call</span>
 <span class="a fl" style="left:7px;top:312px">工装上下机接口:</span><span class="a fv" style="left:146px;top:311px">10</span>
 <span class="a fl" style="left:7px;top:329px">极片报废接口:</span><span class="a fv" style="left:146px;top:328px;width:119px">mes-equip/cut/waste/pole/roll</span>
 <span class="a fl" style="left:7px;top:346px">plc同步时间:</span><span class="a fv" style="left:146px;top:345px">7:59</span>
 <span class="a fl" style="left:7px;top:362px">负极片宽度:</span><span class="a fv" style="left:146px;top:361px">0.0941</span>
 <span class="a fl" style="left:7px;top:379px">负极片消耗长度:</span><span class="a fv" style="left:146px;top:378px">4.8</span>
 <span class="a fl" style="left:7px;top:396px">绿胶消耗长度:</span><span class="a fv" style="left:146px;top:395px">0.0098</span>
 <span class="a fl" style="left:520px;top:262px">产品出站（切叠热压）</span><span class="a fv" style="left:659px;top:261px;width:157px">mes-equip/product/outbound/hot/press</span>
 <span class="a fl" style="left:520px;top:279px">设备加工参数采集</span><span class="a fv" style="left:659px;top:278px;width:192px">mes-equip/equipment/process/parameter/gather</span>
 <span class="a fl" style="left:520px;top:296px">工单数量获取接口</span><span class="a fv" style="left:659px;top:295px;width:175px">mes-equip/workorder/available/qty/query:30</span>
 <span class="a fl" style="left:520px;top:312px">刷卡登录:</span><span class="a fv" style="left:659px;top:311px;width:127px">mes-equip/employee/card/login</span>
 <span class="a fl" style="left:520px;top:329px">开机参数接口:</span><span class="a fv" style="left:659px;top:328px;width:125px">mes-equip/data/check/issuance</span>
 <span class="a fl" style="left:520px;top:346px">正极片宽度:</span><span class="a fv" style="left:659px;top:345px">0.0916</span>
 <span class="a fl" style="left:520px;top:362px">正极片消耗长度:</span><span class="a fv" style="left:659px;top:361px">4.58</span>
 <span class="a fl" style="left:520px;top:379px">隔膜消耗长度:</span><span class="a fv" style="left:659px;top:378px">5.54805</span>
 <span class="a fl" style="left:520px;top:396px">刻码胶消耗长度:</span><span class="a fv" style="left:659px;top:395px">0.00143</span>
 <div class="sb">设备状态: <span style="color:#46c060">运行</span> PLC连接状态: <span style="color:#8fd99f">已连接</span> MES连接状态: <span style="color:#8fd99f">已连接</span> 当前时间: 2025-02-28 21:22:00 运行时间: 1.04:23:20 882版本号: 2025/2/26 16:09:49</div>
</div>

<!-- ============ SHOT 6 ============ -->
<div class="shot" style="left:2505px;top:981px;background:#efefef">
 <div class="tb"><span class="a" style="left:3px">切叠系统</span><span class="a" style="left:594px">◷ 生产监控</span><span class="a" style="left:668px">✂ 离线上传</span><span class="a" style="left:743px">☰ 数据查询</span><span class="a" style="left:818px">✎ 系统管理</span><span class="a" style="left:893px">⚙ 切换用户</span><span class="a" style="left:984px">—</span><span class="a" style="left:1012px;font-size:12px;top:1px">╳</span></div>
 <div class="hd"><span class="a lb" style="left:14px">▲ MES在线生产</span><div class="a tog"><i></i></div><span class="a lb" style="left:120px">▲ 设备编号</span><span class="a val" style="left:109px">A1C3200500017</span><span class="a lb" style="left:226px">▲ Mes账号</span><span class="a val" style="left:211px">10230609</span><span class="a lb" style="left:328px">▲ 员工账号</span><span class="a val" style="left:314px">10250326</span><span class="a lb" style="left:427px">▞ 当班产量</span><span class="a cnt">749</span><span class="a rem">当前工单剩余数量: 75626</span><div class="btn" style="left:726px;top:8px;width:53px">权限注销</div><div class="btn" style="left:829px;top:8px;width:53px">开机参数校验</div></div>
 <div class="btn" style="left:832px;top:65px;width:52px">＋ 添加</div><div class="btn blue" style="left:896px;top:65px;width:52px">✎ 修改</div><div class="btn red" style="left:960px;top:65px;width:52px">✕ 删除</div>
 <div class="gh" style="left:0;top:84px;width:1030px;height:17px;border-top:1px solid #555"><span class="a" style="left:168px;top:5px">用户名</span><span class="a" style="left:508px;top:5px">用户角色</span><span class="a" style="left:854px;top:5px">备注</span></div>
 <div class="a" style="left:0;top:101px;width:1030px;height:27px;background:#fff;border-bottom:2px solid #a8c8b2"><span class="a" style="left:165px;top:10px">工程师</span><span class="a" style="left:842px;top:10px;font-size:6px">MES管理员权限</span></div>
 <div class="a" style="left:0;top:129px;width:1030px;height:27px;background:#fff;border-bottom:2px solid #a8c8b2"><span class="a" style="left:171px;top:10px">1</span><span class="a" style="left:506px;top:10px">操作工</span></div>
 <div class="a" style="left:0;top:157px;width:1030px;height:27px;background:#fff;border-bottom:2px solid #a8c8b2"><span class="a" style="left:169px;top:10px">ts</span><span class="a" style="left:506px;top:10px">技术员</span></div>
 <div class="a" style="left:0;top:185px;width:1030px;height:27px;background:#fff"><span class="a" style="left:170px;top:10px">a</span><span class="a" style="left:506px;top:10px">工程师</span></div>
 <div class="sb">设备状态: <span style="color:#46c060">运行</span> PLC连接状态: <span style="color:#8fd99f">已连接</span> MES连接状态: <span style="color:#8fd99f">已连接</span> 当前时间: 2025-02-28 21:22:23 运行时间: 1.04:23:43 882版本号: 2025/2/26 16:09:49</div>
</div>

<!-- ============ CAPTIONS ============ -->
<div class="cap" style="left:-2px;top:683px"><div class="zh">生产信息追溯</div><div class="en">Production information</div><div class="en">traceability</div></div>
<div class="cap" style="left:1224px;top:683px"><div class="zh">辅料信息查询</div><div class="en">Access to auxiliary</div><div class="en">materials information</div></div>
<div class="cap" style="left:2460px;top:683px"><div class="zh">订单查询</div><div class="en">Order inquiry</div></div>
<div class="cap" style="left:-2px;top:1636px"><div class="zh">出站信息查询</div><div class="en">Outbound information inquiry</div></div>
<div class="cap" style="left:1224px;top:1636px"><div class="zh">系统设置</div><div class="en">System settings</div></div>
<div class="cap" style="left:2460px;top:1636px"><div class="zh">权限设置</div><div class="en">Permission settings</div></div>

</body></html>
